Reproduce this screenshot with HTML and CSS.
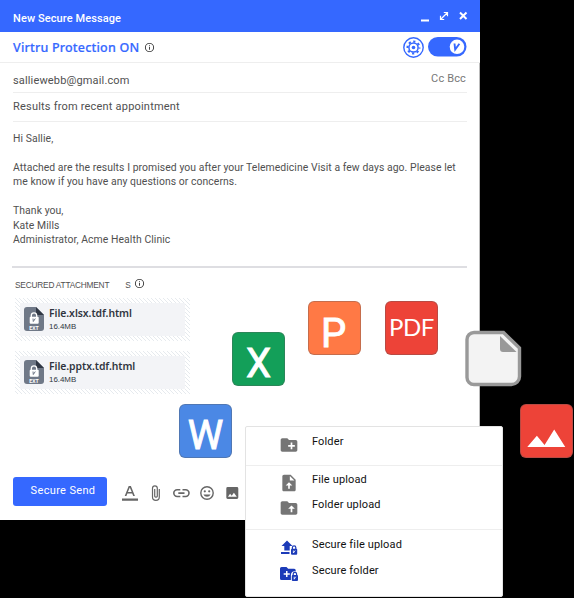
FILE: index.html
```html
<!DOCTYPE html>
<html lang="en">
<head>
<meta charset="utf-8">
<title>New Secure Message</title>
<link rel="stylesheet" href="styles.css">
</head>
<body>
<svg class="defs" aria-hidden="true">
  <symbol id="info" viewBox="0 0 24 24"><path d="M11 7h2v2h-2zm0 4h2v6h-2zm1-9a10 10 0 1 0 0 20 10 10 0 0 0 0-20zm0 18a8 8 0 1 1 0-16 8 8 0 0 1 0 16z"/></symbol>
  <symbol id="locked-file" viewBox="0 0 20 24">
    <path fill="#6f7887" d="M3 0h9l8 8v13a3 3 0 0 1-3 3H3a3 3 0 0 1-3-3V3a3 3 0 0 1 3-3z"/>
    <path fill="#303744" d="M12 0l8 8h-8z"/>
    <path fill="none" stroke="#fff" stroke-width="1.300" d="M7.300 10V8.500a2.700 2.700 0 0 1 5.400 0V10"/>
    <rect fill="#fff" x="5.700" y="9.700" width="9" height="7" rx="1"/>
    <path fill="none" stroke="#6f7887" d="M9 11.500l.3 3 2-3"/>
  </symbol>
</svg>
<main class="compose">
  <header class="titlebar">
    <h1>New Secure Message</h1>
    <svg class="controls" viewBox="0 0 50 14" fill="none" stroke="#fff"><path stroke-width="2" d="M1 10.500h8M40 2.500l6.500 6.500m0-6.500L40 9"/><path stroke-width="1.200" d="M21 9l6-6M23.800 2.500h3.700v3.700M20.500 5.800v3.700h3.700"/></svg>
  </header>
  <section class="protection">
    <h2>Virtru Protection ON</h2>
    <svg class="info"><use href="#info"/></svg>
    <svg class="gear" viewBox="0 0 21 21" fill="none" stroke="#3568ff"><circle cx="10.500" cy="10.500" r="9.700" stroke-width="1.400"/><circle cx="10.500" cy="10.500" r="4.600" stroke-width="1.500"/><circle cx="10.500" cy="10.500" r="6" stroke-width="2" stroke-dasharray="2.200 2.512" stroke-dashoffset="1"/><circle cx="10.500" cy="10.500" r="1.800" fill="#3568ff" stroke="none"/></svg>
    <svg class="toggle" viewBox="0 0 39 20"><rect width="38.500" height="19.500" rx="9.750" fill="#3568ff"/><circle cx="29" cy="9.800" r="7.300" fill="#fff"/><path d="M26.500 6.500l.7 6 4.200-5.800" fill="none" stroke="#3568ff" stroke-width="1.900"/></svg>
  </section>
  <section class="field to"><span>salliewebb@gmail.com</span><span class="cc">Cc Bcc</span></section>
  <section class="field subject">Results from recent appointment</section>
  <section class="message">
    <p>Hi Sallie,</p>
    <p class="body">Attached are the results I promised you after your Telemedicine Visit a few days ago. Please let<br>me know if you have any questions or concerns.</p>
    <p>Thank you,<br>Kate Mills<br>Administrator, Acme Health Clinic</p>
  </section>
  <section class="attachments">
    <h3><span>SECURED ATTACHMENT</span><span class="plural">S</span><svg class="info"><use href="#info"/></svg></h3>
    <article class="file"><div class="file-body"><div class="file-icon"><svg><use href="#locked-file"/></svg><span>EXT</span></div><div><b>File.xlsx.tdf.html</b><small>16.4MB</small></div></div></article>
    <article class="file"><div class="file-body"><div class="file-icon"><svg><use href="#locked-file"/></svg><span>EXT</span></div><div><b>File.pptx.tdf.html</b><small>16.4MB</small></div></div></article>
  </section>
  <footer class="toolbar">
    <button>Secure Send</button>
    <svg class="tools" viewBox="0 0 120 20" fill="#666">
      <path d="M1 15.500h16v2.200H1zM7.700 3h2.200l4 10h-1.700l-1-2.600H6.400l-1 2.600H3.700zM6.900 8.900h3.800L8.800 4.400z"/>
      <path fill="none" stroke="#666" stroke-width="1.200" d="M38.300 6.100v7.800a3.400 3.400 0 0 1-6.800 0V5.300a2.400 2.400 0 0 1 4.800 0v8a1.400 1.400 0 0 1-2.600 0V6.100"/>
      <path fill="none" stroke="#666" stroke-width="1.600" d="M59.300 6.700h-3.100a3.400 3.400 0 0 0 0 6.800h3.100M61.500 6.700h3.100a3.400 3.400 0 0 1 0 6.800h-3.100M57.300 10.100h6.200"/>
      <circle cx="86" cy="10" r="6.200" fill="none" stroke="#666" stroke-width="1.400"/><circle cx="83.800" cy="8.300" r="1.100"/><circle cx="88.200" cy="8.300" r="1.100"/><path d="M82.400 11.400h7.200a3.900 3.900 0 0 1-7.200 0z"/>
      <path fill-rule="evenodd" d="M106.700 4h9.200a1.400 1.400 0 0 1 1.400 1.400v9.200a1.400 1.400 0 0 1-1.400 1.400h-9.200a1.400 1.400 0 0 1-1.400-1.400V5.400a1.400 1.400 0 0 1 1.400-1.400zM107 13.800h8.800l-2.900-4-2.200 2.900-1.600-1.900z"/>
    </svg>
  </footer>
</main>

<div class="tile excel"><span>X</span></div>
<div class="tile slides"><span>P</span></div>
<div class="tile pdf"><span>PDF</span></div>
<div class="tile word"><span>W</span></div>
<svg class="document" viewBox="0 0 58 58"><path d="M9 2.500h29.500L54.500 18v28.500a8 8 0 0 1-8 8H9a7 7 0 0 1-7-7v-38a7 7 0 0 1 7-7z" fill="#f3f3f3" stroke="#999" stroke-width="3.400"/><path d="M35 6l16.500 16H38a3 3 0 0 1-3-3z" fill="#999"/></svg>
<svg class="tile image" viewBox="0 0 53 53"><path fill="#fff" d="M6.500 43L16.500 31.500l8 9.500 10-16 11.500 18z"/></svg>

<nav class="menu">
  <ul>
    <li><svg viewBox="0 0 24 24"><path d="M20 6h-8l-2-2H4c-1.110 0-1.990.890-1.990 2L2 18c0 1.110.890 2 2 2h16c1.110 0 2-.890 2-2V8c0-1.110-.890-2-2-2zm-1 8h-3v3h-2v-3h-3v-2h3V9h2v3h3v2z"/></svg><span>Folder</span></li>
  </ul>
  <ul class="uploads">
    <li><svg viewBox="0 0 24 24"><path d="M14 2H6c-1.100 0-1.990.900-1.990 2L4 20c0 1.100.890 2 1.990 2H18c1.100 0 2-.900 2-2V8l-6-6zm2 13h-3v4h-2v-4H8l4-4 4 4zM13 9V3.500L18.500 9H13z"/></svg><span>File upload</span></li>
    <li><svg viewBox="0 0 24 24"><path d="M20 6h-8l-2-2H4c-1.110 0-1.990.890-1.990 2L2 18c0 1.110.890 2 2 2h16c1.110 0 2-.890 2-2V8c0-1.110-.890-2-2-2zm-2 7h-2v4h-2v-4h-3l4-4 4 4z"/></svg><span>Folder upload</span></li>
  </ul>
  <ul class="secure">
    <li><svg viewBox="0 0 20 20"><path d="M8 1.500l5.500 5.500H10.700V11.500H5.300V7H2.500zM2 13h8.500v2H2z"/><rect x="12" y="9.800" width="6.200" height="6" rx="1"/><path d="M13.400 10v-1.500a1.700 1.700 0 0 1 3.400 0V10" fill="none" stroke="#1c3bb8" stroke-width="1.200"/><path d="M14.400 11.500v2.500l1.800-2.500" fill="none" stroke="#fff" stroke-width=".8"/></svg><span>Secure file upload</span></li>
    <li><svg viewBox="0 0 20 20"><path fill-rule="evenodd" d="M2.500 2h5l1.700 1.700h6a1.500 1.500 0 0 1 1.500 1.500V6.500a3.500 3.500 0 0 0-4.800 3V15H2.500A1.500 1.500 0 0 1 1 13.500v-10A1.500 1.500 0 0 1 2.500 2zM7 6v2.300H4.700v1.500H7V12h1.500V9.800h2.300V8.300H8.500V6z"/><rect x="12.800" y="10" width="6.200" height="6" rx="1"/><path d="M14.200 10.500V9a1.700 1.700 0 0 1 3.400 0v1.500" fill="none" stroke="#1c3bb8" stroke-width="1.200"/><path d="M15.200 11.700v2.500l1.600-2.500" fill="none" stroke="#fff" stroke-width=".8"/></svg><span>Secure folder</span></li>
  </ul>
</nav>
</body>
</html>
```
FILE: styles.css
```css
* { box-sizing: border-box; }
body { margin: 0; width: 574px; height: 598px; overflow: hidden; background: #000; color: #505050; font-family: Roboto, "Liberation Sans", sans-serif; position: relative; }
h1, h2, h3, p, ul { margin: 0; padding: 0; }
svg { display: block; flex: none; }
.defs { position: absolute; width: 0; height: 0; }
.compose { width: 480px; height: 520px; background: #fff; border-right: 1px solid #bbb; }
.titlebar { width: 480px; height: 32px; background: #3568ff; display: flex; align-items: center; justify-content: space-between; padding: 5px 10px 0 13px; }
.titlebar h1 { color: #fff; font-size: 11px; font-weight: 500; line-height: 14px; letter-spacing: .1px; }
.controls { width: 50px; height: 14px; margin-bottom: 4px; }
.protection { width: 480px; height: 31px; background: #fff; border-bottom: 1px solid #eee; display: flex; align-items: center; padding: 0 13px; }
.protection h2 { color: #3568ff; font: 500 12.500px/18px "Noto Sans", sans-serif; letter-spacing: .2px; margin-top: 1px; -webkit-text-stroke: .2px #3568ff; }
.info { width: 11px; height: 11px; fill: #333; }
.protection .info { margin-left: 5px; }
.gear { width: 21px; height: 21px; margin-left: auto; }
.toggle { width: 39px; height: 20px; margin-left: 4px; }
.field { margin: 0 12px 0 13px; border-bottom: 1px solid #eee; font-size: 11px; line-height: 14px; }
.to { height: 30px; padding-top: 11px; display: flex; justify-content: space-between; letter-spacing: .15px; }
.cc { color: #777; margin: -2px 1px 0 0; letter-spacing: .15px; }
.subject { height: 29px; padding-top: 7px; letter-spacing: .2px; }
.message { height: 146px; margin: 0 12px; padding: 10px 1px 0; border-bottom: 2px solid #dedee2; font-size: 10.400px; line-height: 14.500px; letter-spacing: .08px; white-space: nowrap; }
.message p + p { margin-top: 14px; }
.message .body { letter-spacing: .065px; line-height: 14.800px; }
.attachments { height: 209px; padding: 11px 15px 0; }
.attachments h3 { display: flex; align-items: center; height: 12px; font: 400 8.300px/12px "Liberation Sans", sans-serif; letter-spacing: -.2px; }
.plural { margin-left: 16px; }
.attachments .info { margin: -3px 0 0 3px; }
.file { width: 175px; height: 43px; margin-top: 7px; padding: 5px; background: repeating-linear-gradient(45deg, #fff 0 1.600px, #e6eaee 1.600px 2.828px); }
.file + .file { margin-top: 10px; }
.file-body { height: 33px; background: #f3f4f7; display: flex; padding: 4px; }
.file-icon { position: relative; width: 20px; height: 24px; margin-right: 5px; }
.file-icon svg { width: 20px; height: 24px; }
.file-icon span { position: absolute; left: 0; bottom: 0; width: 20px; text-align: center; color: #fff; font: 700 5.200px/6px Roboto, sans-serif; }
.file b, .file small { display: block; color: #303540; }
.file b { font: 600 10.400px/13px "Noto Sans", sans-serif; letter-spacing: -.06px; }
.file small { font: 400 7.900px/14px "Liberation Sans", sans-serif; }
.toolbar { display: flex; padding: 0 13px; }
button { width: 94px; height: 29px; border: 0; border-radius: 3px; background: #3568ff; color: #fff; font: 400 11px/26px Roboto, sans-serif; letter-spacing: .35px; padding: 0 0 2px 6px; }
.tools { width: 120px; height: 20px; margin: 6px 0 0 14px; }
.tile { position: absolute; width: 53px; height: 54px; border-radius: 6px; border: 1px solid rgba(90,90,90,.35); color: #fff; display: flex; justify-content: center; font: 400 40px/61px Roboto, sans-serif; -webkit-text-stroke: .9px #fff; }
.excel { left: 232px; top: 332px; background: #139f59; }
.slides { left: 308px; top: 301px; background: #ff7945; line-height: 64px; }
.slides span { margin-right: 2px; }
.pdf { left: 385px; top: 301px; background: #ed4338; font: 400 24px/50px Lato, sans-serif; letter-spacing: -.4px; -webkit-text-stroke: 0; }
.word { left: 179px; top: 404px; background: #4b88e5; }
.image { left: 520px; top: 404px; background: #ed4338; }
.document { position: absolute; left: 465px; top: 330px; width: 58px; height: 58px; }
.menu { position: absolute; left: 245px; top: 426px; width: 258px; height: 171px; background: #fff; border: 1px solid #e3e3e3; border-radius: 2px; color: #111; font-size: 11px; letter-spacing: .14px; }
.menu ul { list-style: none; height: 64px; border-bottom: 1px solid #eee; padding: 7px 0 0 33px; }
.menu ul:first-child { height: 39px; }
.menu ul.uploads { padding-top: 6px; }
.menu ul:last-child { border: 0; }
.menu li { display: flex; height: 25px; line-height: 16px; }
.menu .secure li { height: 26px; }
.menu svg { width: 20px; height: 20px; margin: 1px 13px 0 0; fill: #757575; }
.menu .uploads svg { margin-top: 1px; }
.menu .secure svg { fill: #1c3bb8; margin-top: 2px; }
```
